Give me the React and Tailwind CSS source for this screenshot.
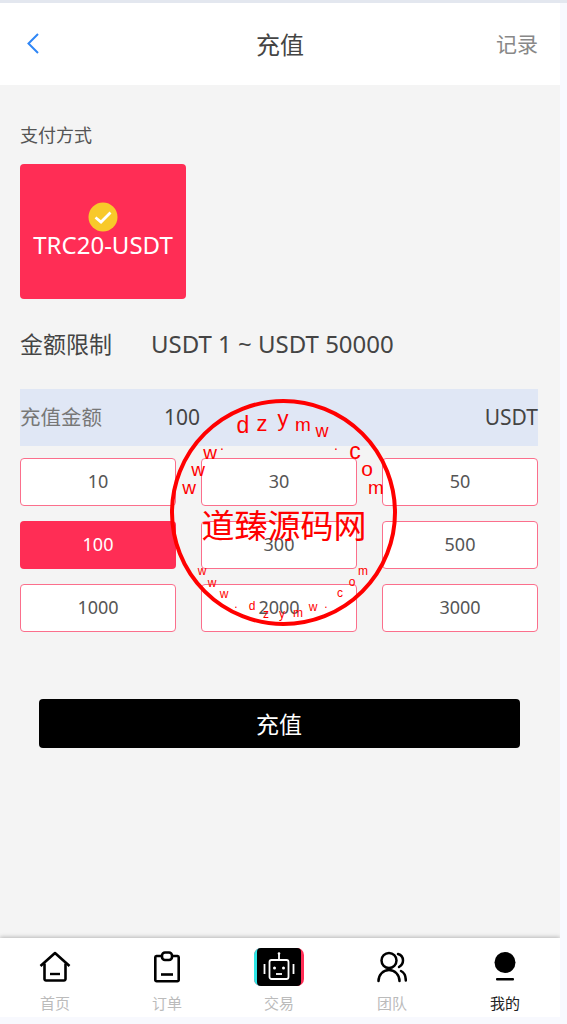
import React from "react";

const font = { fontFamily: '"Noto Sans","Noto Sans CJK SC",sans-serif' };

function Amt({ v, active }) {
  return (
    <div className={active
      ? "h-[47.5px] flex items-center justify-center rounded-[4px] bg-[#ff2d55] text-white text-[18px]"
      : "h-[47.5px] flex items-center justify-center rounded-[4px] bg-white border border-[#fb6f8c] text-[#555] text-[18px]"}>
      {v}
    </div>
  );
}

function Tab({ label, active, w, children }) {
  return (
    <div className={`${w} flex flex-col items-center`}>
      <div className="h-[38px] flex items-center justify-center">{children}</div>
      <div className={active ? "text-[15px] leading-[20px] mt-[7px] text-[#222]" : "text-[15px] leading-[20px] mt-[7px] text-[#bbb]"}>{label}</div>
    </div>
  );
}

const Home = () => (
  <svg width="32" height="32" viewBox="0 0 32 32" fill="none" stroke="#000" strokeWidth="2.6" strokeLinejoin="round">
    <path d="M1.500 15 16 2l14.500 13" />
    <path d="M5.500 12.500V28a1.500 1.500 0 0 0 1.500 1.500h18a1.500 1.500 0 0 0 1.500-1.500V12.500" />
    <path d="M11 23h10" strokeWidth="2.400" />
  </svg>
);
const Order = () => (
  <svg width="26" height="32" viewBox="0 0 26 32" fill="none" stroke="#000" strokeWidth="2.600" strokeLinejoin="round">
    <path d="M8 5H2.500A1.300 1.300 0 0 0 1.300 6.300v22.700a1.300 1.300 0 0 0 1.300 1.300h20.800a1.300 1.300 0 0 0 1.300-1.300V6.300A1.300 1.300 0 0 0 23.500 5H18" />
    <rect x="8" y="1.500" width="10" height="7.500" rx="3" />
    <path d="M7 23.500h12" />
  </svg>
);
const Robot = () => (
  <div className="relative w-[50px] h-[38px] rounded-[7px] bg-[#ff2d55]">
    <div className="absolute left-0 top-0 w-[40px] h-[38px] rounded-[7px] bg-[#2ee6e6]" />
    <div className="absolute left-[3px] top-0 w-[44px] h-[38px] rounded-[4px] bg-black flex items-center justify-center">
      <svg width="34" height="32" viewBox="0 0 34 32" fill="none" stroke="#fff" strokeWidth="1.800">
        <rect x="7.500" y="9" width="19" height="19" rx="2" />
        <path d="M17 9V3" />
        <circle cx="17" cy="2.500" r="1.300" fill="#fff" stroke="none" />
        <path d="M2.500 13v10M31.500 13v10" />
        <circle cx="12.500" cy="17" r="1.500" fill="#fff" stroke="none" />
        <circle cx="21.500" cy="17" r="1.500" fill="#fff" stroke="none" />
        <path d="M14 23h6" />
      </svg>
    </div>
  </div>
);
const Team = () => (
  <svg width="30" height="32" viewBox="0 0 30 32" fill="none" stroke="#000" strokeWidth="2.500" strokeLinecap="round">
    <circle cx="12" cy="9.500" r="7.500" />
    <path d="M1.500 30c0-6 4.500-11 10.500-11s10.500 5 10.500 11" />
    <path d="M21 3c3.500 1 5 3.800 5 6.500s-1.500 5-4 6.500" />
    <path d="M24 20c3 1.500 4.800 5 4.800 9.500" />
  </svg>
);
const Me = () => (
  <svg width="22" height="30" viewBox="0 0 22 30" fill="#000">
    <ellipse cx="11" cy="10.500" rx="10.500" ry="10.500" />
    <rect x="2" y="26" width="18" height="2.600" rx="1" />
  </svg>
);

function Stamp() {
  const big = [
    ["d", 243, 433, 23], ["z", 262, 431, 22], ["y", 283, 426, 22], ["m", 303, 431, 19], ["w", 322, 437, 18],
    ["w", 210, 459, 19], [".", 222, 450, 14], [".", 336, 450, 14], ["c", 355, 459, 23], ["o", 367, 476, 21], ["m", 376, 494, 19],
    ["w", 198, 476, 19], ["w", 189, 494, 19],
  ];
  const small = [
    ["w", 202, 575], ["w", 212, 587], ["w", 224, 598], [".", 236, 608], ["d", 252, 610], ["z", 266, 618], ["y", 282, 618], ["m", 298, 617], ["w", 313, 611], [".", 326, 608], ["c", 340, 597], ["o", 352, 586], ["m", 363, 575],
  ];
  return (
    <svg className="absolute left-0 top-0 pointer-events-none" width="567" height="1024" viewBox="0 0 567 1024" fill="#f00" style={{ fontFamily: '"Liberation Sans","Noto Sans CJK SC",sans-serif' }}>
      <circle cx="283.500" cy="512.500" r="111.500" fill="none" stroke="#f00" strokeWidth="4" />
      <text x="284" y="538" textAnchor="middle" fontSize="33">道臻源码网</text>
      {big.map(([t, x, y, s], i) => <text key={i} x={x} y={y} textAnchor="middle" fontSize={s}>{t}</text>)}
      {small.map(([t, x, y], i) => <text key={i} x={x} y={y} textAnchor="middle" fontSize="12">{t}</text>)}
    </svg>
  );
}

export default function App() {
  return (
    <div className="relative w-[567px] h-[1024px] bg-[#f8f9fe] overflow-hidden" style={font}>
      <div className="h-[3px] bg-[#e3e7ef]" />
      <div className="w-[560px] h-[1014px] flex flex-col overflow-hidden">
        <header className="h-[82px] bg-white shrink-0 flex items-center justify-between pl-[25px] pr-[22px] relative">
          <svg width="18" height="24" viewBox="0 0 18 24" fill="none" stroke="#2f86f6" strokeWidth="2" className="-mt-[3px]">
            <path d="M13 3 3.500 12.500 13 22" />
          </svg>
          <div className="absolute left-0 right-0 text-center text-[24px] text-[#444] pt-[2px]">充值</div>
          <div className="text-[21px] text-[#888] pt-[2px]">记录</div>
        </header>

        <main className="flex-1 bg-[#f4f4f4] pl-[20px] pr-[22px] pt-[35px]">
          <div className="text-[18px] leading-[30px] text-[#555]">支付方式</div>
          <div className="mt-[14px] w-[166px] h-[135px] rounded-[4px] bg-[#ff2d55] flex flex-col items-center pt-[38px] text-white">
            <svg width="30" height="30" viewBox="0 0 30 30">
              <circle cx="15" cy="15" r="14.500" fill="#f8c92a" />
              <path d="M7.500 15.500 13 20l9.500-9.500" fill="none" stroke="#fff" strokeWidth="2.800" />
            </svg>
            <div className="text-[24px] leading-[30px] mt-[-2px] whitespace-nowrap">TRC20-USDT</div>
          </div>

          <div className="mt-[24px] flex items-center h-[40px] text-[#444] pt-[2px]">
            <span className="w-[131px] text-[23px]">金额限制</span>
            <span className="text-[24px]">USDT 1 ~ USDT 50000</span>
          </div>

          <div className="mt-[26px] h-[57px] bg-[#e0e7f5] flex items-center justify-between">
            <div className="flex items-center">
              <span className="w-[144px] text-[#777] text-[20.500px]">充值金额</span>
              <span className="text-[#444] text-[21px]">100</span>
            </div>
            <span className="text-[#444] text-[21px]">USDT</span>
          </div>

          <div className="mt-[12px] grid grid-cols-3 gap-x-[25px] gap-y-[15.500px]">
            <Amt v="10" /><Amt v="30" /><Amt v="50" />
            <Amt v="100" active /><Amt v="300" /><Amt v="500" />
            <Amt v="1000" /><Amt v="2000" /><Amt v="3000" />
          </div>

          <div className="mt-[67.500px] mx-[18.500px] h-[49px] rounded-[4px] bg-black text-white text-[23px] flex items-center justify-center pt-[2px]">充值</div>
        </main>

        <nav className="h-[79px] bg-white shrink-0 flex shadow-[0_-1px_4px_rgba(0,0,0,0.25)] pt-[10px] relative">
          <Tab w="w-[110px]" label="首页"><Home /></Tab>
          <Tab w="w-[114px]" label="订单"><Order /></Tab>
          <Tab w="w-[110px]" label="交易"><Robot /></Tab>
          <Tab w="w-[116px]" label="团队"><Team /></Tab>
          <Tab w="w-[110px]" label="我的" active><Me /></Tab>
        </nav>
      </div>
      <Stamp />
    </div>
  );
}
